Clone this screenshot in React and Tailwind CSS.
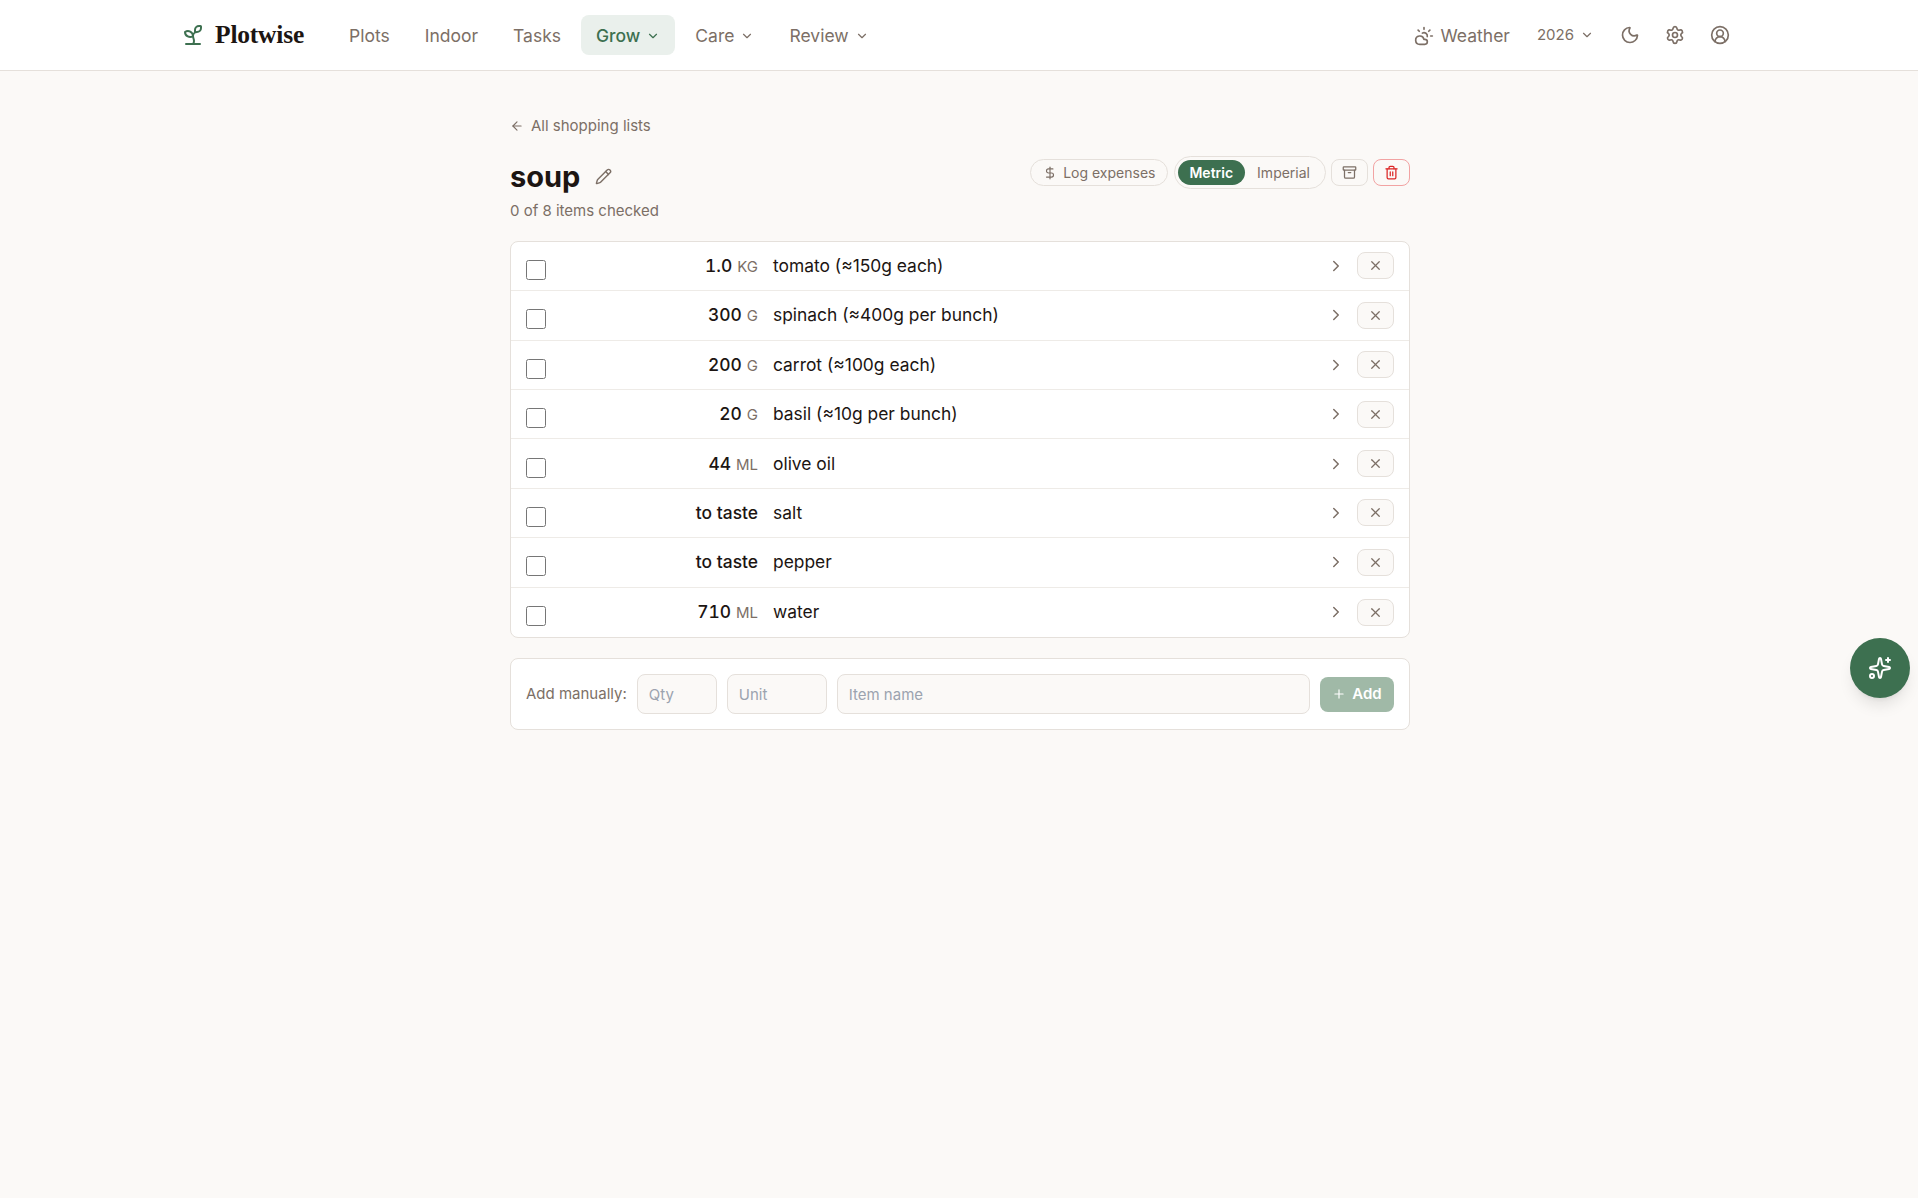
import React from 'react';
import { Sprout, ChevronDown, ChevronRight, CloudSun, Moon, Settings, CircleUserRound, ArrowLeft, Pencil, DollarSign, Archive, Trash2, X, Plus, Sparkles } from 'lucide-react';

const items = [
  { qty: '1.0', unit: 'KG', name: 'tomato (≈150g each)' },
  { qty: '300', unit: 'G', name: 'spinach (≈400g per bunch)' },
  { qty: '200', unit: 'G', name: 'carrot (≈100g each)' },
  { qty: '20', unit: 'G', name: 'basil (≈10g per bunch)' },
  { qty: '44', unit: 'ML', name: 'olive oil' },
  { qty: 'to taste', unit: '', name: 'salt' },
  { qty: 'to taste', unit: '', name: 'pepper' },
  { qty: '710', unit: 'ML', name: 'water' },
];

const NavItem = ({ label, caret, active }) => (
  <a className={`flex items-center gap-[6px] h-10 px-[15px] pt-[2px] rounded-lg text-[17.5px] ${active ? 'bg-[#eaf0ec] text-[#3d7050] font-medium' : 'text-[#7c6f66]'}`}>
    {label}
    {caret && <ChevronDown className="w-[14px] h-[14px]" />}
  </a>
);

const App = () => {
  return (
    <div className="min-h-screen bg-[#fbf9f7] font-['Inter',sans-serif] text-[#1c1512]">
      <header className="bg-white border-b border-[#e5e0db] h-[71px]">
        <div className="max-w-[1600px] mx-auto px-[22px] h-full flex items-center justify-between">
          <div className="flex items-center">
            <a className="flex items-center gap-[10px] mr-[30px]">
              <Sprout className="w-6 h-6 text-[#3d7050]" />
              <span className="font-['Liberation_Serif',serif] font-bold text-[25.5px] tracking-[-0.2px]">Plotwise</span>
            </a>
            <nav className="flex items-center gap-[5px]">
              <NavItem label="Plots" />
              <NavItem label="Indoor" />
              <NavItem label="Tasks" />
              <NavItem label="Grow" caret active />
              <NavItem label="Care" caret />
              <NavItem label="Review" caret />
            </nav>
          </div>
          <div className="flex items-center text-[#7c6f66] pr-[7px]">
            <a className="flex items-center gap-[7px] text-[17.5px] pt-[2px] mr-[27px]">
              <CloudSun className="w-5 h-5" />
              Weather
            </a>
            <button className="flex items-center gap-[6px] text-[15px] mr-[26px]">
              2026
              <ChevronDown className="w-[14px] h-[14px]" />
            </button>
            <div className="flex items-center gap-[25px]">
              <Moon className="w-5 h-5" />
              <Settings className="w-5 h-5" />
              <CircleUserRound className="w-5 h-5" />
            </div>
          </div>
        </div>
      </header>

      <main className="max-w-[902px] mx-auto pl-[2px] pt-[44px]">
        <a className="flex items-center gap-[7px] text-[15px] text-[#7c6f66] h-[22px]">
          <ArrowLeft className="w-[14px] h-[14px]" />
          All shopping lists
        </a>
        <div className="flex items-start justify-between mt-[16px]">
          <div>
            <div className="flex items-center gap-[15px] h-[44px] pt-[2px]">
              <h1 className="text-[29px] font-bold leading-none">soup</h1>
              <Pencil className="w-[17px] h-[17px] text-[#7c6f66]" />
            </div>
            <p className="text-[15px] text-[#7c6f66] mt-[3px] leading-[22px]">0 of 8 items checked</p>
          </div>
          <div className="flex items-center gap-[5px] text-[14px] text-[#7c6f66] mt-[3px]">
            <button className="flex items-center gap-[6px] h-[27px] px-[12px] rounded-full border border-[#e5e0db]">
              <DollarSign className="w-[14px] h-[14px]" />
              Log expenses
            </button>
            <div className="flex items-center h-[33px] ml-[1px] px-[3px] rounded-full border border-[#e5e0db]">
              <button className="h-[25px] pl-[11px] pr-[12px] rounded-full bg-[#3d7050] text-white font-semibold">Metric</button>
              <button className="h-[25px] px-[12px] rounded-full">Imperial</button>
            </div>
            <button className="flex items-center justify-center w-[37px] h-[27px] rounded-lg border border-[#e5e0db]">
              <Archive className="w-[15px] h-[15px]" />
            </button>
            <button className="flex items-center justify-center w-[37px] h-[27px] rounded-lg border border-[#f2a3a3] text-[#dc2626]">
              <Trash2 className="w-[15px] h-[15px]" />
            </button>
          </div>
        </div>

        <div className="mt-[18.8px] bg-white border border-[#e5e0db] rounded-lg overflow-hidden">
          {items.map((item) => (
            <div key={item.name} className="flex items-center h-[49.4px] px-[15px] border-b border-[#eeebe7] last:border-b-0">
              <input type="checkbox" className="w-5 h-5 mt-2 shrink-0" />
              <div className="w-[212px] text-right shrink-0">
                <span className="font-medium text-[17.4px] tabular-nums">{item.qty}</span>
                {item.unit && <span className="ml-[5px] text-[15px] text-[#7c6f66]">{item.unit}</span>}
              </div>
              <span className="flex-1 ml-[15px] text-[17.4px]">{item.name}</span>
              <ChevronRight className="w-[18px] h-[18px] text-[#7c6f66] mr-[12px]" />
              <button className="flex items-center justify-center w-[37px] h-[27px] rounded-lg border border-[#e5e0db] bg-[#fbf9f7] text-[#7c6f66]">
                <X className="w-[15px] h-[15px]" />
              </button>
            </div>
          ))}
        </div>

        <div className="mt-[20.2px] flex items-center gap-[10px] h-[72px] px-[15px] bg-white border border-[#e5e0db] rounded-lg">
          <span className="text-[15px] text-[#7c6f66]">Add manually:</span>
          <input placeholder="Qty" className="w-20 h-10 px-[11px] text-[15px] rounded-lg border border-[#e5e0db] bg-[#fbf9f7] placeholder:text-[#9ca3af]" />
          <input placeholder="Unit" className="w-[100px] h-10 px-[11px] text-[15px] rounded-lg border border-[#e5e0db] bg-[#fbf9f7] placeholder:text-[#9ca3af]" />
          <input placeholder="Item name" className="flex-1 min-w-0 h-10 px-[11px] text-[15px] rounded-lg border border-[#e5e0db] bg-[#fbf9f7] placeholder:text-[#9ca3af]" />
          <button className="flex items-center gap-[6px] justify-center w-[74px] h-[35px] rounded-lg bg-[#a0b9a7] text-white text-[15px] font-semibold">
            <Plus className="w-[14px] h-[14px]" />
            Add
          </button>
        </div>
      </main>

      <button className="fixed right-[8px] top-[638px] w-[60px] h-[60px] rounded-full bg-[#3d7050] text-white flex items-center justify-center shadow-lg">
        <Sparkles className="w-6 h-6" />
      </button>
    </div>
  );
};

export default App;
